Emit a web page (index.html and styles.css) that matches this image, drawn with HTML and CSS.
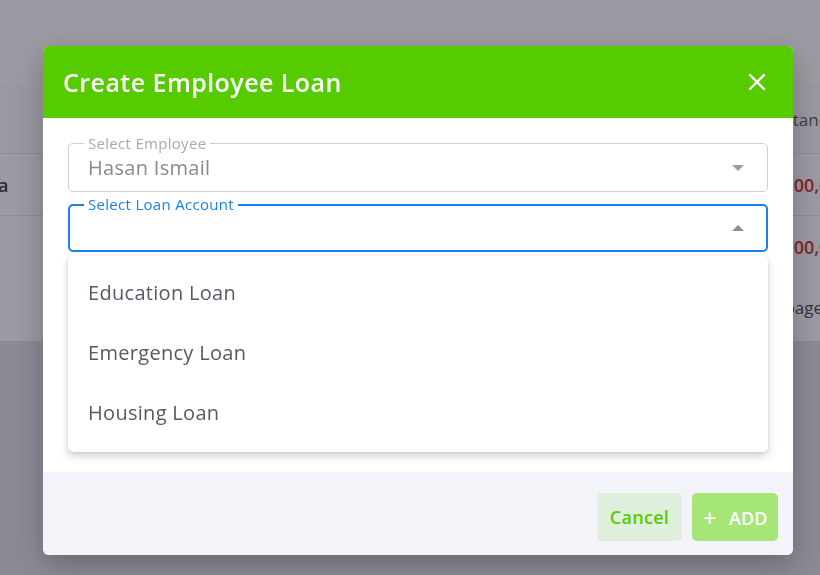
FILE: index.html
```html
<!DOCTYPE html>
<html lang="en">
<head>
    <meta charset="UTF-8">
    <meta name="viewport" content="width=device-width, initial-scale=1.0">
    <title>Employee Loans</title>
    <link rel="stylesheet" href="styles.css">
</head>
<body>
    <div class="page">
        <div class="card">
            <div class="table-head">
                <span class="th">Outstanding</span>
            </div>
            <div class="table-row">
                <span class="td name">Diana</span>
                <span class="td red">500,000</span>
            </div>
            <div class="table-row">
                <span class="td name"></span>
                <span class="td red">300,000</span>
            </div>
            <div class="table-foot">
                <span class="td">Rows per page</span>
            </div>
        </div>
    </div>

    <div class="overlay">
        <div class="modal">
            <div class="modal-header">
                <h1>Create Employee Loan</h1>
                <button class="close" type="button" aria-label="Close">
                    <svg width="18" height="18" viewBox="0 0 18 18">
                        <path d="M2 2 L16 16 M16 2 L2 16" stroke="#fff" stroke-width="2.4" stroke-linecap="round"/>
                    </svg>
                </button>
            </div>
            <div class="modal-body">
                <div class="field">
                    <label class="field-label">Select Employee</label>
                    <span class="field-value">Hasan Ismail</span>
                    <span class="arrow down"></span>
                </div>
                <div class="field-wrap">
                    <div class="field focused">
                        <label class="field-label">Select Loan Account</label>
                        <span class="field-value"></span>
                        <span class="arrow up"></span>
                    </div>
                    <ul class="menu">
                        <li>Education Loan</li>
                        <li>Emergency Loan</li>
                        <li>Housing Loan</li>
                    </ul>
                </div>
                <div class="field">
                    <label class="field-label">Amount</label>
                    <span class="field-value"></span>
                </div>
                <div class="field">
                    <label class="field-label">Note</label>
                    <span class="field-value"></span>
                </div>
            </div>
            <div class="modal-footer">
                <button class="btn btn-cancel" type="button">Cancel</button>
                <button class="btn btn-add" type="button"><span class="plus">+</span> ADD</button>
            </div>
        </div>
    </div>
</body>
</html>
```

FILE: styles.css
```css
body {
    margin: 0;
    font-family: "Open Sans", "Noto Sans", sans-serif;
    background: #e3e2e8;
    overflow: hidden;
}
.page {
    height: 575px;
    overflow: hidden;
}
.card {
    background: #fff;
    height: 341px;
    box-sizing: border-box;
    padding-top: 85px;
}
.table-head {
    display: flex;
    justify-content: flex-end;
    align-items: center;
    height: 68px;
    border-bottom: 1px solid #e6e6e6;
    background: #fcfcfc;
    color: #555;
    font-size: 17px;
    margin-right: -33px;
}
.table-row {
    display: flex;
    justify-content: space-between;
    align-items: center;
    height: 61px;
    border-bottom: 1px solid #e6e6e6;
    font-size: 18px;
    font-weight: 600;
    color: #333;
    margin-left: -42px;
    margin-right: -30px;
}
.table-row + .table-row {
    border-bottom: none;
}
.table-foot {
    display: flex;
    justify-content: flex-end;
    height: 60px;
    align-items: center;
    font-size: 17px;
    color: #444;
    margin-right: -3px;
}
.red {
    color: #d32a2a;
}

.overlay {
    position: fixed;
    inset: 0;
    background: rgba(35, 30, 48, 0.45);
    padding: 46px 0 0 43px;
}
.modal {
    width: 750px;
    background: #fff;
    border-radius: 6px;
    overflow: hidden;
    box-shadow: 0 10px 30px rgba(0, 0, 0, 0.25);
}
.modal-header {
    background: #55cb00;
    height: 72px;
    display: flex;
    align-items: center;
    justify-content: space-between;
    padding: 0 27px 0 20px;
}
.modal-header h1 {
    margin: 0;
    color: #fff;
    font-size: 25px;
    font-weight: 600;
    letter-spacing: 0.45px;
}
.close {
    background: none;
    border: none;
    padding: 0;
    display: flex;
    cursor: pointer;
}
.modal-body {
    height: 354px;
    box-sizing: border-box;
    padding: 25px 25px 0;
    display: flex;
    flex-direction: column;
    gap: 12px;
}
.field-wrap {
    position: relative;
}
.field {
    position: relative;
    height: 49px;
    box-sizing: border-box;
    border: 1px solid #cfcfcf;
    border-radius: 5px;
    display: flex;
    align-items: center;
    padding: 0 19px;
}
.field.focused {
    height: 48px;
    border: 2px solid #1a7ff2;
    padding: 0 18px;
}
.field-label {
    position: absolute;
    top: -10px;
    left: 15px;
    padding: 0 4px;
    background: #fff;
    font-size: 15px;
    letter-spacing: 0.3px;
    line-height: 18px;
    color: #a9a9a9;
}
.focused .field-label {
    left: 14px;
    top: -11px;
    color: #1a7ff2;
}
.field-value {
    flex: 1;
    font-size: 20px;
    letter-spacing: 0.3px;
    color: #8a8a8a;
}
.arrow {
    width: 0;
    height: 0;
    border-left: 6px solid transparent;
    border-right: 6px solid transparent;
    margin-right: 4px;
}
.arrow.down {
    border-top: 6px solid #9b9b9b;
}
.arrow.up {
    border-bottom: 6px solid #8f8f8f;
}
.menu {
    position: absolute;
    top: 52px;
    left: 0;
    right: 0;
    margin: 0;
    padding: 6px 0 10px;
    list-style: none;
    background: #fff;
    border-radius: 5px;
    box-shadow: 0 4px 10px rgba(0, 0, 0, 0.18), 0 1px 3px rgba(0, 0, 0, 0.08);
    z-index: 2;
}
.menu li {
    height: 60px;
    display: flex;
    align-items: center;
    padding: 0 20px;
    font-size: 20px;
    letter-spacing: 0.3px;
    color: #565a66;
}
.modal-footer {
    background: #f3f4f9;
    height: 83px;
    box-sizing: border-box;
    display: flex;
    justify-content: flex-end;
    gap: 10px;
    padding: 21px 15px 0;
}
.btn {
    height: 48px;
    border: none;
    border-radius: 5px;
    font-family: inherit;
    font-size: 18px;
    font-weight: 600;
    cursor: pointer;
    padding: 0;
}
.btn-cancel {
    width: 85px;
    background: #e0efdc;
    color: #55cb00;
    letter-spacing: 0.3px;
}
.btn-add {
    width: 86px;
    background: #a6e577;
    color: #fff;
}
.plus {
    font-weight: 400;
    font-size: 24px;
    margin-right: 8px;
    vertical-align: -2px;
}
```
